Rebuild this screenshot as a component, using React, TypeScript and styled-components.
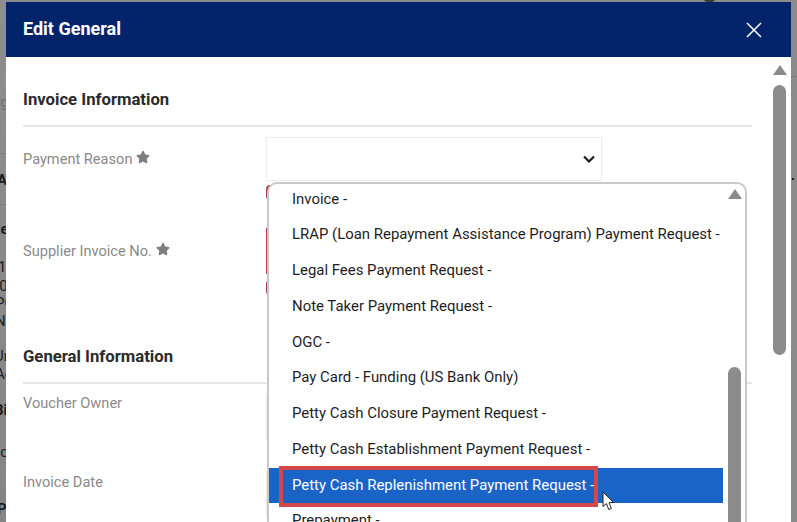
import { FC } from "react";
import styled, { createGlobalStyle } from "styled-components";
import { FaStar } from "react-icons/fa";

const options = [
    "Invoice -",
    "LRAP (Loan Repayment Assistance Program) Payment Request -",
    "Legal Fees Payment Request -",
    "Note Taker Payment Request -",
    "OGC -",
    "Pay Card - Funding (US Bank Only)",
    "Petty Cash Closure Payment Request -",
    "Petty Cash Establishment Payment Request -",
    "Petty Cash Replenishment Payment Request -",
    "Prepayment -",
];

// bits of the page behind the dialog, cut off by the dialog's left edge
const behind = [
    { text: "age", gap: 94, shift: -8, bold: false, faint: true },
    { text: "Ac", gap: 61, shift: -3, bold: true, faint: false },
    { text: "Re", gap: 32, shift: -9, bold: true, faint: false },
    { text: "1", gap: 21, shift: -2, bold: false, faint: false },
    { text: "-0", gap: 2, shift: -5, bold: false, faint: false },
    { text: "PO", gap: 0, shift: -5, bold: false, faint: false },
    { text: "Ne", gap: 1, shift: -5, bold: false, faint: false },
    { text: "Ur", gap: 18, shift: -6, bold: false, faint: false },
    { text: "Ac", gap: 1, shift: -5, bold: false, faint: false },
    { text: "Bi", gap: 19, shift: -6, bold: true, faint: false },
    { text: "Oc", gap: 25, shift: -10, bold: false, faint: false },
    { text: "Pa", gap: 40, shift: -3, bold: true, faint: false },
];

const Stars: FC = () => (
    <StyledStar><FaStar size={14} /></StyledStar>
);

export default function App() {
    return (
        <StyledPage>
            <GlobalStyle />
            <StyledBehindLeft>
                {behind.map((b, i) => (
                    <StyledBehindText key={i} $gap={b.gap} $shift={b.shift} $bold={b.bold} $faint={b.faint}>{b.text}</StyledBehindText>
                ))}
                <StyledBehindRule $top={153} />
                <StyledBehindRule $top={204} />
            </StyledBehindLeft>

            <StyledModal>
                <StyledHeader>
                    <StyledTitle>Edit General</StyledTitle>
                    <StyledClose viewBox="0 0 16 16" aria-label="Close">
                        <path d="M1 1 L15 15 M15 1 L1 15" />
                    </StyledClose>
                </StyledHeader>

                <StyledBody>
                    <StyledContent>
                        <StyledSectionTitle>Invoice Information</StyledSectionTitle>
                        <StyledField $height={91}>
                            <StyledLabel $top={12}>Payment Reason <Stars /></StyledLabel>
                            <StyledControl>
                                <StyledInput $height={44}>
                                    <StyledChevron viewBox="0 0 12 8">
                                        <path d="M1 1.5 L6 6.5 L11 1.5" />
                                    </StyledChevron>
                                </StyledInput>
                                <StyledError $gap={4} />
                                <StyledDropdown>
                                    <StyledList>
                                        {options.map((o) => {
                                            const selected = o.startsWith("Petty Cash Replenishment");
                                            return (
                                                <StyledOption key={o} $selected={selected}>
                                                    {o}
                                                    {selected && <StyledHighlight />}
                                                    {selected && (
                                                        <StyledCursor viewBox="0 0 13 20">
                                                            <path d="M1 1 L1 15.5 L4.4 12.6 L6.8 18.6 L9.4 17.5 L7 11.7 L11.6 11.5 Z" />
                                                        </StyledCursor>
                                                    )}
                                                </StyledOption>
                                            );
                                        })}
                                    </StyledList>
                                    <StyledListScroll>
                                        <StyledArrow />
                                        <StyledListThumb />
                                    </StyledListScroll>
                                </StyledDropdown>
                            </StyledControl>
                        </StyledField>
                        <StyledField $height={118}>
                            <StyledLabel $top={13}>Supplier Invoice No. <Stars /></StyledLabel>
                            <StyledControl>
                                <StyledInput $height={46} $invalid />
                                <StyledError $gap={6} />
                            </StyledControl>
                        </StyledField>

                        <StyledSectionTitle>General Information</StyledSectionTitle>
                        <StyledField $height={77}>
                            <StyledLabel $top={-1}>Voucher Owner</StyledLabel>
                            <StyledControl>
                                <StyledInput $height={46} />
                            </StyledControl>
                        </StyledField>
                        <StyledField $height={50}>
                            <StyledLabel $top={1}>Invoice Date</StyledLabel>
                            <StyledControl>
                                <StyledInput $height={46} />
                            </StyledControl>
                        </StyledField>
                    </StyledContent>

                    <StyledBodyScroll>
                        <StyledArrow />
                        <StyledBodyThumb />
                    </StyledBodyScroll>
                </StyledBody>
            </StyledModal>

            <StyledBehindRight>
                <StyledBehindRule $top={76} />
                <StyledBehindDot />
            </StyledBehindRight>
            <StyledAvatarEdge />
        </StyledPage>
    );
}

const GlobalStyle = createGlobalStyle`
html, body {
    margin: 0;
    padding: 0;
    overflow: hidden;
}
body {
    font-family: Roboto, "Liberation Sans", sans-serif;
}
`
const StyledPage = styled.div`
display: flex;
width: 797px;
height: 522px;
position: relative;
overflow: hidden;
background: #8b8b8b;
`
const StyledBehindLeft = styled.div`
width: 6px;
flex: none;
display: flex;
flex-direction: column;
align-items: flex-start;
overflow: hidden;
position: relative;
background: linear-gradient(#8e8e8e, #858585);
`
const StyledBehindRight = styled.div`
width: 6px;
flex: none;
position: relative;
background: #8a8a8a;
`
const StyledBehindText = styled.div<{ $gap: number; $shift: number; $bold: boolean; $faint: boolean }>`
margin-top: ${(p) => p.$gap}px;
margin-left: ${(p) => p.$shift}px;
font-size: 15px;
line-height: 17px;
font-weight: ${(p) => (p.$bold ? 700 : 400)};
color: ${(p) => (p.$faint ? "#6f6f6f" : "#1b1b1b")};
white-space: nowrap;
flex: none;
`
const StyledBehindRule = styled.div<{ $top: number }>`
position: absolute;
left: 0;
right: 0;
top: ${(p) => p.$top}px;
height: 1px;
background: #7a7a7a;
`
const StyledBehindDot = styled.div`
position: absolute;
left: 1px;
top: 178px;
width: 2px;
height: 2px;
background: #222;
`
const StyledAvatarEdge = styled.div`
position: absolute;
left: 703px;
top: -10px;
width: 13px;
height: 13px;
border-radius: 50%;
background: #3a3a3a;
`
const StyledModal = styled.div`
flex: 1;
margin-top: 2px;
display: flex;
flex-direction: column;
min-width: 0;
background: #fff;
z-index: 1;
`
const StyledHeader = styled.div`
height: 55px;
flex: none;
box-sizing: border-box;
display: flex;
align-items: center;
justify-content: space-between;
padding: 0 29px 0 17px;
background: #03246b;
`
const StyledTitle = styled.h1`
margin: -2px 0 0;
font-size: 18px;
font-weight: 700;
color: #fff;
`
const StyledClose = styled.svg`
width: 16px;
height: 16px;
fill: none;
stroke: #fff;
stroke-width: 1.5;
`
const StyledBody = styled.div`
flex: 1;
display: flex;
min-height: 0;
overflow: hidden;
`
const StyledContent = styled.div`
width: 729px;
margin-left: 17px;
padding-top: 32px;
flex: none;
`
const StyledSectionTitle = styled.h2`
margin: 0 0 10px;
padding-bottom: 14px;
font-size: 16.7px;
line-height: 22px;
font-weight: 700;
color: #2b2b2b;
border-bottom: 2px solid #e6e6e6;
`
const StyledField = styled.div<{ $height: number }>`
display: grid;
grid-template-columns: 243px 336px;
height: ${(p) => p.$height}px;
`
const StyledLabel = styled.label<{ $top: number }>`
margin-top: ${(p) => p.$top}px;
font-size: 14.6px;
line-height: 20px;
color: #8a8a8a;
`
const StyledStar = styled.span`
color: #7d7d7d;
svg {
    vertical-align: 0;
}
`
const StyledControl = styled.div`
position: relative;
`
const StyledInput = styled.div<{ $height: number; $invalid?: boolean }>`
height: ${(p) => p.$height}px;
box-sizing: border-box;
display: flex;
align-items: center;
justify-content: flex-end;
padding-right: 6px;
background: #fff;
border: 1px solid ${(p) => (p.$invalid ? "#b2404f" : "#ececec")};
`
const StyledChevron = styled.svg`
width: 12px;
height: 8px;
fill: none;
stroke: #1c1c1c;
stroke-width: 2.2;
`
const StyledError = styled.div<{ $gap: number }>`
height: 15px;
margin-top: ${(p) => p.$gap}px;
border-radius: 4px;
background: #a8404f;
`
const StyledDropdown = styled.div`
position: absolute;
left: 1px;
top: 45px;
width: 480px;
height: 400px;
box-sizing: border-box;
display: flex;
overflow: hidden;
background: #fff;
border: 2px solid #c8c8c8;
border-radius: 10px;
z-index: 2;
`
const StyledList = styled.div`
width: 454px;
flex: none;
margin-top: -2.3px;
`
const StyledOption = styled.div<{ $selected: boolean }>`
position: relative;
height: 35.75px;
line-height: 35.75px;
padding-left: 23px;
font-size: 14.93px;
white-space: nowrap;
color: ${(p) => (p.$selected ? "#fff" : "#1e1e1e")};
background: ${(p) => (p.$selected ? "#1a64c8" : "transparent")};
`
const StyledHighlight = styled.div`
position: absolute;
left: 10px;
top: -2px;
width: 319px;
height: 41px;
box-sizing: border-box;
border: 4px solid #d4474b;
`
const StyledCursor = styled.svg`
position: absolute;
left: 333px;
top: 23px;
width: 13px;
height: 20px;
fill: #fff;
stroke: #222;
stroke-width: 1;
`
const StyledListScroll = styled.div`
flex: none;
display: flex;
flex-direction: column;
align-items: center;
width: 13px;
margin-left: 5px;
padding-top: 5px;
`
const StyledArrow = styled.div`
flex: none;
width: 0;
height: 0;
border-left: 7.5px solid transparent;
border-right: 7.5px solid transparent;
border-bottom: 10px solid #8a8a8a;
`
const StyledListThumb = styled.div`
flex: none;
width: 13px;
height: 300px;
margin-top: 168px;
border-radius: 7px;
background: #8c8c8c;
`
const StyledBodyScroll = styled.div`
flex: none;
display: flex;
flex-direction: column;
align-items: center;
width: 13px;
margin-left: 21px;
padding-top: 8px;
`
const StyledBodyThumb = styled.div`
flex: none;
width: 13px;
height: 270px;
margin-top: 10px;
border-radius: 7px;
background: #8c8c8c;
`
